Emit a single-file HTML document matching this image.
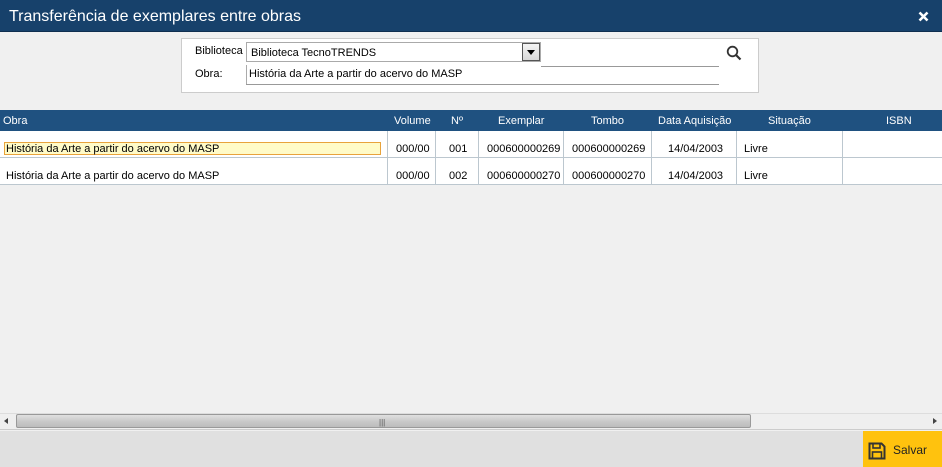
<!DOCTYPE html>
<html><head><meta charset="utf-8"><style>
*{margin:0;padding:0;box-sizing:border-box}
body{width:942px;height:467px;background:#f0f0f0;font-family:"Liberation Sans","DejaVu Sans",sans-serif;font-size:11px;color:#000;position:relative;overflow:hidden}
.abs{position:absolute}
.title{left:0;top:0;width:942px;height:32px;background:#17416b;color:#fff;font-size:16px;padding:8px 0 0 9px;border-bottom:1px solid #0f2e4f}
.box{left:181px;top:38px;width:578px;height:55px;background:#fff;border:1px solid #ccc}
.lbl{font-size:11px}
.hdr{left:0;top:110px;width:942px;height:21px;background:#1f5180;color:#fff}
.hdr span{position:absolute;top:5px;font-size:11px}
.row{left:0;width:942px;height:27px;background:#fff;border-bottom:1px solid #bcc7cf}
.row span{position:absolute;top:12px}
.sep{position:absolute;top:0;width:1px;height:26px;background:#bcc7cf}
</style></head><body>
<div class="abs title">Transferência de exemplares entre obras</div>
<svg class="abs" style="left:918px;top:11px" width="11" height="11" viewBox="0 0 11 11"><path d="M1.5 1.5L9.5 9.5M9.5 1.5L1.5 9.5" stroke="#fff" stroke-width="2.6"/></svg>
<div class="abs box">
 <div class="abs lbl" style="left:13px;top:6px">Biblioteca</div>
 <div class="abs lbl" style="left:13px;top:29px">Obra:</div>
 <div class="abs" style="left:64px;top:3px;width:295px;height:20px;border:1px solid #aaa;padding:4px 0 0 4px">Biblioteca TecnoTRENDS</div>
 <div class="abs" style="left:340px;top:4px;width:18px;height:18px;border:1px solid #555;background:linear-gradient(#f4f4f4,#d8d8d8)"><div style="margin:6px 0 0 4px;width:0;height:0;border-left:4px solid transparent;border-right:4px solid transparent;border-top:5px solid #000"></div></div>
 <div class="abs" style="left:359px;top:27px;width:178px;height:1px;background:#999"></div>
 <div class="abs" style="left:64px;top:26px;width:1px;height:19px;background:#aaa"></div>
 <div class="abs" style="left:64px;top:45px;width:473px;height:1px;background:#999"></div>
 <div class="abs" style="left:67px;top:29px">História da Arte a partir do acervo do MASP</div>
 <svg class="abs" style="left:544px;top:6px" width="16" height="16" viewBox="0 0 16 16"><circle cx="6.5" cy="6.5" r="4.8" fill="none" stroke="#333" stroke-width="1.8"/><line x1="10" y1="10" x2="14.5" y2="14.5" stroke="#333" stroke-width="2.2"/></svg>
</div>
<div class="abs hdr">
 <span style="left:3px">Obra</span>
 <span style="left:394px">Volume</span>
 <span style="left:451px">Nº</span>
 <span style="left:498px">Exemplar</span>
 <span style="left:591px">Tombo</span>
 <span style="left:658px">Data Aquisição</span>
 <span style="left:768px">Situação</span>
 <span style="left:886px">ISBN</span>
</div>
<div class="abs row" style="top:131px">
 <div class="abs" style="left:4px;top:11px;width:377px;height:13px;background:#fffbc8;border:1px solid #e8a33c"></div>
 <span style="left:6px;top:12px">História da Arte a partir do acervo do MASP</span>
 <div class="sep" style="left:387px"></div><span style="left:396px">000/00</span>
 <div class="sep" style="left:435px"></div><span style="left:449px">001</span>
 <div class="sep" style="left:478px"></div><span style="left:487px">000600000269</span>
 <div class="sep" style="left:563px"></div><span style="left:572px">000600000269</span>
 <div class="sep" style="left:651px"></div><span style="left:668px">14/04/2003</span>
 <div class="sep" style="left:736px"></div><span style="left:744px">Livre</span>
 <div class="sep" style="left:842px"></div>
</div>
<div class="abs row" style="top:158px">
 <span style="left:6px">História da Arte a partir do acervo do MASP</span>
 <div class="sep" style="left:387px"></div><span style="left:396px">000/00</span>
 <div class="sep" style="left:435px"></div><span style="left:449px">002</span>
 <div class="sep" style="left:478px"></div><span style="left:487px">000600000270</span>
 <div class="sep" style="left:563px"></div><span style="left:572px">000600000270</span>
 <div class="sep" style="left:651px"></div><span style="left:668px">14/04/2003</span>
 <div class="sep" style="left:736px"></div><span style="left:744px">Livre</span>
 <div class="sep" style="left:842px"></div>
</div>
<div class="abs" style="left:0;top:413px;width:942px;height:17px;background:#efefef;border-top:1px solid #ddd;border-bottom:1px solid #ccc"></div>
<div class="abs" style="left:4px;top:418px;width:0;height:0;border-top:3px solid transparent;border-bottom:3px solid transparent;border-right:4px solid #444"></div>
<div class="abs" style="left:933px;top:418px;width:0;height:0;border-top:3px solid transparent;border-bottom:3px solid transparent;border-left:4px solid #444"></div>
<div class="abs" style="left:16px;top:414px;width:735px;height:14px;border:1px solid #999;border-radius:2px;background:linear-gradient(#e0e0e0,#c8c8c8 55%,#bcbcbc)"></div>
<div class="abs" style="left:379px;top:418px;font-size:8px;color:#555">|||</div>
<div class="abs" style="left:0;top:431px;width:942px;height:36px;background:#e0e0e0"></div>
<div class="abs" style="left:863px;top:431px;width:79px;height:36px;background:#ffc20e"></div>
<svg class="abs" style="left:868px;top:442px" width="18" height="18" viewBox="0 0 18 18"><path d="M1.5 1.5h12l3 3v12h-15z" fill="none" stroke="#333" stroke-width="2"/><rect x="5" y="1.5" width="7" height="4.5" fill="none" stroke="#333" stroke-width="1.6"/><rect x="4.5" y="10" width="9" height="6.5" fill="none" stroke="#333" stroke-width="1.6"/></svg>
<div class="abs" style="left:893px;top:443px;font-size:12px;color:#222">Salvar</div>
</body></html>
